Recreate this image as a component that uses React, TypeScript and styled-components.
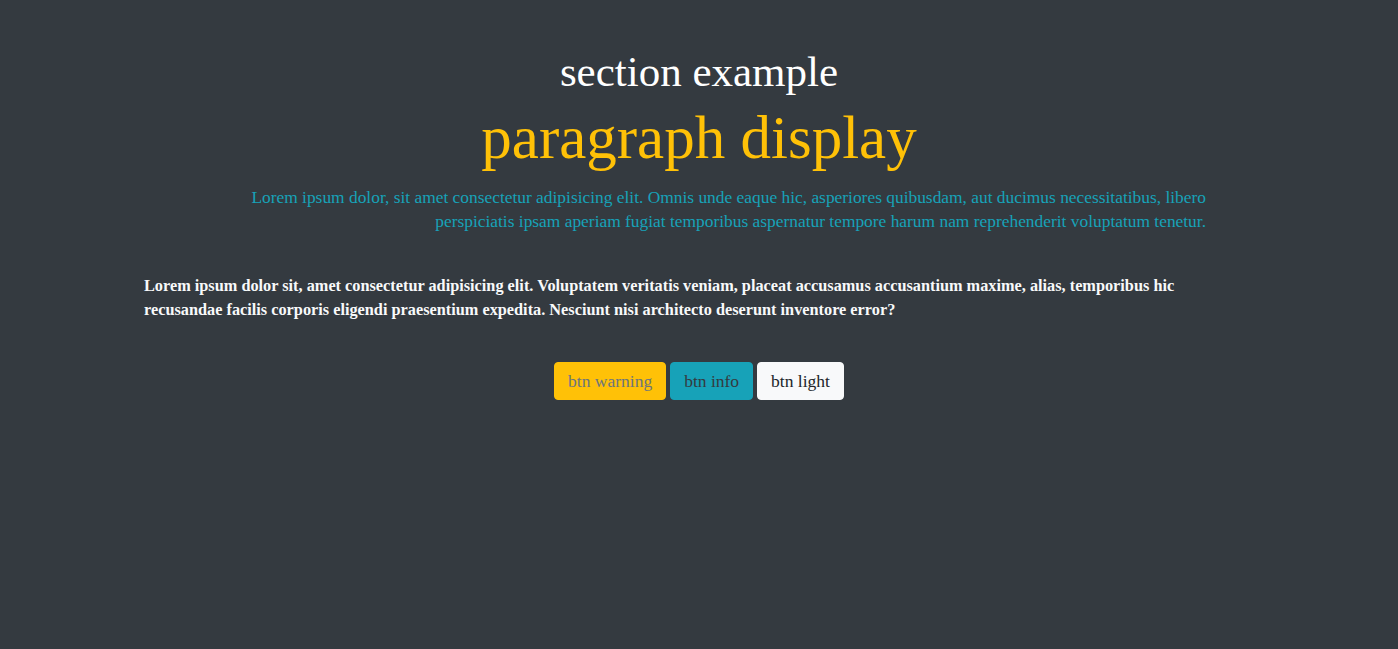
import React from 'react';
import styled, { createGlobalStyle } from 'styled-components';

const GlobalStyle = createGlobalStyle`
  html, body {
    margin: 0;
    padding: 0;
    background-color: #343a40;
  }
  body {
    font-family: "Liberation Serif", "Times New Roman", serif;
    font-size: 17.5px;
    line-height: 24px;
    color: #ffffff;
  }
  * {
    box-sizing: border-box;
  }
`;

const ScPage = styled.div`
  min-height: 100vh;
  background-color: #343a40;
`;

const ScContainer = styled.section`
  max-width: 1140px;
  margin: 0 auto;
  padding: 46px 15px 0;
`;

const ScTitle = styled.h1`
  margin: 0;
  font-size: 43px;
  font-weight: 400;
  line-height: 1.2;
  text-align: center;
  color: #ffffff;
`;

const ScDisplay = styled.p`
  margin: 3px 0 0;
  font-size: 61px;
  line-height: 1.2;
  text-align: center;
  color: #ffc107;
`;

const ScLead = styled.p`
  margin: 11px 0 0;
  padding: 0 48px;
  font-size: 17.4px;
  text-align: right;
  color: #17a2b8;
`;

const ScText = styled.p`
  margin: 41px 0 0;
  font-size: 16.3px;
  font-weight: 700;
  color: #f8f9fa;
`;

const ScButtons = styled.div`
  margin-top: 40px;
  display: flex;
  justify-content: center;
  gap: 4px;
`;

const variants = {
  warning: { bg: '#ffc107', fg: '#6c757d' },
  info: { bg: '#17a2b8', fg: '#343a40' },
  light: { bg: '#f8f9fa', fg: '#212529' },
};

const ScButton = styled.button<{ $variant: keyof typeof variants }>`
  font-family: inherit;
  font-size: 17.5px;
  line-height: 24px;
  padding: 6px 13px;
  border: 1px solid ${(p) => variants[p.$variant].bg};
  border-radius: 4px;
  background-color: ${(p) => variants[p.$variant].bg};
  color: ${(p) => variants[p.$variant].fg};
  cursor: pointer;
`;

export default function App() {
  return (
    <ScPage>
      <GlobalStyle />
      <ScContainer>
        <ScTitle>{'section example'}</ScTitle>
        <ScDisplay>{'paragraph display'}</ScDisplay>
        <ScLead>
          {'Lorem ipsum dolor, sit amet consectetur adipisicing elit. Omnis unde eaque hic, asperiores quibusdam, aut ducimus necessitatibus, libero perspiciatis ipsam aperiam fugiat temporibus aspernatur tempore harum nam reprehenderit voluptatum tenetur.'}
        </ScLead>
        <ScText>
          {'Lorem ipsum dolor sit, amet consectetur adipisicing elit. Voluptatem veritatis veniam, placeat accusamus accusantium maxime, alias, temporibus hic recusandae facilis corporis eligendi praesentium expedita. Nesciunt nisi architecto deserunt inventore error?'}
        </ScText>
        <ScButtons>
          <ScButton $variant="warning">{'btn warning'}</ScButton>
          <ScButton $variant="info">{'btn info'}</ScButton>
          <ScButton $variant="light">{'btn light'}</ScButton>
        </ScButtons>
      </ScContainer>
    </ScPage>
  );
}
